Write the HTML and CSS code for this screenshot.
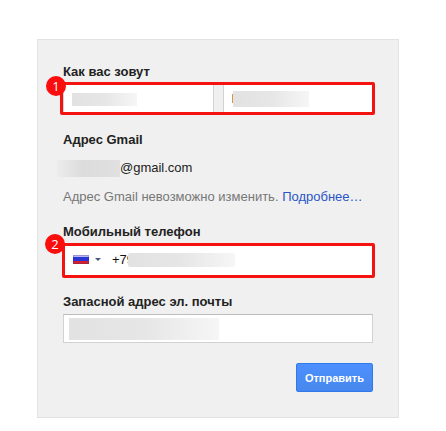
FILE: index.html
```
<!DOCTYPE html>
<html lang="ru">

<head>
    <meta charset="UTF-8">
    <meta name="viewport" content="width=device-width, initial-scale=1.0">
    <title>Личные данные</title>
    <link rel="stylesheet" href="styles.css">
</head>

<body>
    <form class="panel">
        <div class="group">
            <label for="first-name">Как вас зовут</label>
            <div class="names">
                <div class="field">
                    <input type="text" id="first-name">
                    <span class="mask mask-first"></span>
                </div>
                <div class="field">
                    <input type="text" id="last-name" value="К" aria-label="Фамилия">
                    <span class="mask mask-last"></span>
                </div>
                <span class="frame frame-names"></span>
                <span class="badge badge-names">1</span>
            </div>
        </div>

        <div class="group">
            <h2>Адрес Gmail</h2>
            <p class="email"><span class="email-mask"></span>@gmail.com</p>
            <p class="hint">Адрес Gmail невозможно изменить. <a href="#more">Подробнее…</a></p>
        </div>

        <div class="group">
            <label for="phone">Мобильный телефон</label>
            <div class="phone">
                <button type="button" class="country" aria-label="Страна">
                    <svg width="28" height="9" viewBox="0 0 28 9">
                        <rect width="16" height="3" fill="#b9b9f0" />
                        <rect y="2" width="16" height="4" fill="#2a35d8" />
                        <rect y="6" width="16" height="3" fill="#d5202c" />
                        <rect x="0.5" y="0.5" width="15" height="8" fill="none" stroke="#303080" stroke-opacity="0.25" />
                        <path d="M22 3h6l-3 3z" fill="#44597c" />
                    </svg>
                </button>
                <input type="tel" id="phone" value="+79">
                <span class="mask mask-phone"></span>
                <span class="frame frame-phone"></span>
                <span class="badge badge-phone">2</span>
            </div>
        </div>

        <div class="group">
            <label for="recovery">Запасной адрес эл. почты</label>
            <div class="field">
                <input type="email" id="recovery">
                <span class="mask mask-recovery"></span>
            </div>
        </div>

        <div class="actions">
            <button type="submit" class="submit">Отправить</button>
        </div>
    </form>
</body>

</html>
```

FILE: styles.css
```
* {
    margin: 0;
    padding: 0;
    box-sizing: border-box;
}

body {
    background-color: #fff;
    color: #222;
    font-family: Arial, "Liberation Sans", sans-serif;
    font-size: 13px;
    line-height: 16px;
}

.panel {
    margin: 39px 47px 13px 37px;
    padding: 24px 25px 25px;
    background-color: #f0f0f0;
    border: 1px solid #e2e2e2;
}

.group {
    margin-bottom: 19px;
}

.group label,
.group h2 {
    display: block;
    font-size: 13px;
    font-weight: bold;
}

.group label {
    margin-bottom: 4px;
}

/* Text fields */
.names {
    position: relative;
    display: flex;
    gap: 9px;
}

.field {
    position: relative;
    flex: 1;
}

input {
    display: block;
    width: 100%;
    height: 29px;
    padding: 0 8px;
    background-color: #fff;
    border: 1px solid #d2d2d2;
    border-top-color: #bdbdbd;
    color: #111;
    font-family: inherit;
    font-size: 13px;
}

.phone {
    position: relative;
    display: flex;
    align-items: center;
    height: 31px;
    background-color: #fff;
}

.phone input {
    flex: 1;
    min-width: 0;
    padding: 0 11px;
    border: none;
}

.country {
    display: flex;
    padding-left: 10px;
    background: none;
    border: none;
    cursor: pointer;
}

/* Hidden personal data */
.mask {
    position: absolute;
    background: linear-gradient(to right, #e2e2e2, #e6e6e6 50%, #f6f6f6);
    pointer-events: none;
}

.mask-first {
    left: 9px;
    top: 9px;
    width: 65px;
    height: 13px;
}

.mask-last {
    left: 10px;
    top: 7px;
    width: 76px;
    height: 16px;
}

.mask-phone {
    left: 65px;
    top: 9px;
    width: 107px;
    height: 14px;
    border-radius: 2px;
}

.mask-recovery {
    left: 6px;
    top: 4px;
    width: 150px;
    height: 22px;
}

/* Gmail address */
.email {
    display: flex;
    margin-top: 12px;
}

.email-mask {
    width: 63px;
    height: 17px;
    margin-left: -6px;
    background: linear-gradient(to right, #ececec, #dcdcdc 40%, #e0e0e0);
}

.hint {
    margin-top: 12px;
    color: #777;
}

.hint a {
    color: #2a56c6;
    text-decoration: none;
}

/* Red marks over the fields */
.frame {
    position: absolute;
    border: 3px solid #f5130f;
    border-radius: 2px;
    pointer-events: none;
}

.frame-names {
    inset: -2px -2px -2px -3px;
}

.frame-phone {
    inset: -1px -2px -3px -1px;
}

.badge {
    position: absolute;
    width: 20px;
    height: 20px;
    border-radius: 50%;
    background-color: #f90d0d;
    color: #fff;
    font-family: "Open Sans", sans-serif;
    font-size: 13px;
    line-height: 20px;
    text-align: center;
}

.badge-names {
    left: -17px;
    top: -8px;
}

.badge-phone {
    left: -18px;
    top: -10px;
}

/* Submit */
.actions {
    display: flex;
    justify-content: flex-end;
    margin-top: 20px;
}

.submit {
    height: 29px;
    padding: 0 8px;
    background: linear-gradient(#4d90fe, #4787ed);
    border: 1px solid #3079ed;
    border-radius: 2px;
    color: #fff;
    font-family: inherit;
    font-size: 11px;
    font-weight: bold;
    cursor: pointer;
}
```
